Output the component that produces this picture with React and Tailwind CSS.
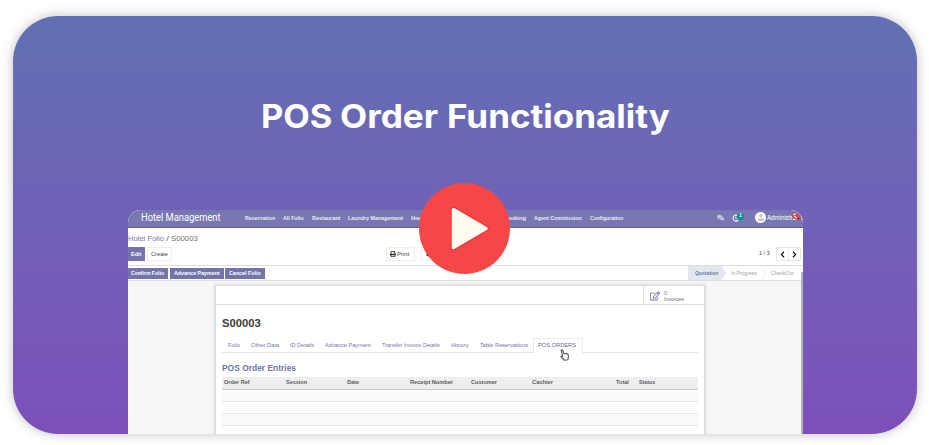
import { useLayoutEffect, useRef } from "react";
import { FaComments, FaPrint, FaCog, FaRegEdit, FaChevronLeft, FaChevronRight, FaUser } from "react-icons/fa";

// One line of text stretched to fill the width of its box.
function Fit({ className, children }) {
  const box = useRef(null);
  const text = useRef(null);
  useLayoutEffect(() => {
    const ratio = box.current.clientWidth / text.current.offsetWidth;
    text.current.style.transform = `scaleX(${ratio})`;
  }, []);
  return (
    <span ref={box} className={`block shrink-0 whitespace-nowrap ${className}`}>
      <span ref={text} className="inline-block origin-left align-top">{children}</span>
    </span>
  );
}

const menu = [
  ["Reservation", "w-[30px]"],
  ["All Folio", "ml-[8px] w-[21px]"],
  ["Restaurant", "ml-[8px] w-[28px]"],
  ["Laundry Management", "ml-[8px] w-[55px]"],
  ["Housekeeping", "ml-[8px] w-[37px]"],
  ["Table Booking", "ml-[39px] w-[39px]"],
  ["Agent Commission", "ml-[8px] w-[48px]"],
  ["Configuration", "ml-[8px] w-[33px]"],
];

const tabs = [
  ["Folio", "ml-[6px] w-[12px]"],
  ["Other Data", "ml-[11px] w-[28px]"],
  ["ID Details", "ml-[11px] w-[24px]"],
  ["Advance Payment", "ml-[11px] w-[46px]"],
  ["Transfer Invoice Details", "ml-[11px] w-[58px]"],
  ["History", "ml-[11px] w-[18px]"],
  ["Table Reservations", "ml-[11px] w-[48px]"],
];

const columns = [
  ["Order Ref", "ml-[2px] w-[26px]"],
  ["Session", "ml-[36px] w-[21px]"],
  ["Date", "ml-[40px] w-[12px]"],
  ["Receipt Number", "ml-[51px] w-[43px]"],
  ["Customer", "ml-[18px] w-[26px]"],
  ["Cashier", "ml-[35px] w-[21px]"],
  ["Total", "ml-[63px] w-[13px]"],
  ["Status", "ml-[10px] w-[16px]"],
];

function Navbar() {
  return (
    <div className="flex h-[18px] items-center border-b border-[#66669f] bg-[#7777b1] pb-[2px] text-white">
      <Fit className="ml-[13px] w-[80px] pt-[1px] font-['Roboto','Liberation_Sans',sans-serif] text-[10.5px] leading-[12px]">Hotel Management</Fit>
      <div className="ml-[24px] flex items-center pt-[1px] text-[6px] font-bold leading-[7px] text-[#ececf7]">
        {menu.map(([label, size]) => <Fit key={label} className={size}>{label}</Fit>)}
      </div>
      <FaComments className="ml-[94px] h-[7px] w-[7px] shrink-0 text-[#c5c5df]" />
      <div className="relative ml-[8px] h-[8px] w-[8px] shrink-0">
        <svg viewBox="0 0 8 8" className="h-[8px] w-[8px]" fill="none" stroke="#f1f1fa">
          <path d="M6.2 2A3 3 0 1 0 6.4 6" strokeWidth="1.2" />
          <path d="M3.8 2.7v1.8h1.5" strokeWidth=".8" />
        </svg>
        <span className="absolute -top-[1px] left-[5px] flex h-[7px] w-[7px] items-center justify-center rounded-full bg-[#08929a] text-[4.5px] font-bold leading-none">1</span>
      </div>
      <div className="ml-[15px] flex h-[11px] w-[11px] shrink-0 items-center justify-center rounded-full bg-white">
        <FaUser className="h-[7px] w-[6px] text-[#c7c7cf]" />
      </div>
      <div className="relative ml-[1px]">
        <Fit className="w-[36px] text-[6.5px] leading-[8px]">Administrator</Fit>
        <svg viewBox="0 0 9 7" className="absolute -top-[1px] left-[25px] h-[7px] w-[9px]">
          <path d="M0 0h5l4 4v3H5L0 4z" fill="#c4504c" />
          <path d="M1 1.2h3M2 3l3 2" stroke="#fff" strokeWidth="1" />
          <path d="M5 5l2 1" stroke="#4a3848" />
        </svg>
      </div>
    </div>
  );
}

function ControlPanel() {
  return (
    <>
      <div className="flex h-[19px] items-center pt-[1px] text-[7.5px] leading-[9px] text-[#707070]">
        <Fit className="w-[36px] text-[#7777ab]">Hotel Folio</Fit>
        <Fit className="ml-[2px] w-[3px]">/</Fit>
        <Fit className="ml-[2px] w-[27px]">S00003</Fit>
      </div>
      <div className="flex h-[19px] items-start border-b border-[#ddd] text-[6px] leading-[7px] text-[#444]">
        <div className="flex h-[14px] w-[17px] items-center bg-[#7474ac] text-white">
          <Fit className="ml-[3px] w-[10px] font-bold">Edit</Fit>
        </div>
        <div className="ml-[2px] flex h-[14px] w-[25px] items-center border border-[#eee] pl-[3px]">
          <Fit className="w-[17px]">Create</Fit>
        </div>
        <div className="ml-[214px] flex h-[14px] w-[29px] items-center border border-[#eee] pl-[3px]">
          <FaPrint className="h-[6px] w-[6px] text-[#333]" />
          <Fit className="ml-[1px] w-[12px]">Print</Fit>
        </div>
        <div className="ml-[6px] flex h-[14px] w-[34px] items-center border border-[#eee] pl-[4px]">
          <FaCog className="h-[6px] w-[6px] text-[#222]" />
          <Fit className="ml-[1px] w-[16px]">Action</Fit>
        </div>
        <Fit className="ml-[304px] mt-[3px] w-[11px]">1 / 3</Fit>
        <div className="ml-[6px] flex h-[14px] w-[25px] rounded-[1px] border border-[#e6e6e6] text-black">
          <span className="flex w-[12px] items-center justify-center border-r border-[#eee]"><FaChevronLeft className="h-[7px] w-[5px]" /></span>
          <span className="flex w-[12px] items-center justify-center"><FaChevronRight className="h-[7px] w-[5px]" /></span>
        </div>
      </div>
    </>
  );
}

function StatusBar() {
  return (
    <div className="flex h-[15px] items-center border-b border-[#dcdcdc] text-[6px] leading-[7px]">
      <div className="flex h-[11px] w-[40px] items-center bg-[#7474ac] font-bold text-white"><Fit className="ml-[3px] w-[33px]">Confirm Folio</Fit></div>
      <div className="ml-[2px] flex h-[11px] w-[54px] items-center bg-[#7474ac] font-bold text-white"><Fit className="ml-[4px] w-[46px]">Advance Payment</Fit></div>
      <div className="ml-[1px] flex h-[11px] w-[40px] items-center bg-[#7474ac] font-bold text-white"><Fit className="ml-[4px] w-[32px]">Cancel Folio</Fit></div>
      <div className="ml-[423px] flex h-full w-[34px] items-center bg-[#e2e6ed] text-[#6d79a8]"><Fit className="ml-[7px] w-[23px] font-bold">Quotation</Fit></div>
      <svg viewBox="0 0 4 14" className="h-[14px] w-[4px]"><path d="M0 0L4 7L0 14z" fill="#e2e6ed" /></svg>
      <Fit className="ml-[5px] w-[26px] text-[#9c9c9c]">In Progress</Fit>
      <svg viewBox="0 0 4 14" className="ml-[5px] h-[14px] w-[4px]"><path d="M0 0L3.5 7L0 14" fill="none" stroke="#ececec" /></svg>
      <Fit className="ml-[5px] w-[23px] text-[#9c9c9c]">CheckOut</Fit>
    </div>
  );
}

function PointerHand({ className }) {
  return (
    <svg viewBox="0 0 9 12" className={className}>
      <path
        d="M1.2 1.2c.5-.6 1.3-.4 1.6.3L4 4.6l2.6-.1c1.2.2 1.7.9 1.8 2.1.1 1.7-.4 2.5-.4 4.1L4.3 11.3C3.6 9.8 1.8 9.2.9 7.6c.3-.7 1-.7 1.8-.1z"
        fill="#fff"
        stroke="#555"
        strokeWidth="1.1"
        strokeLinejoin="round"
      />
    </svg>
  );
}

function Sheet() {
  return (
    <div className="ml-[87px] mt-[4px] h-[150px] w-[490px] border border-[#d9d9d9] bg-white shadow-[0_0_4px_rgba(0,0,0,0.16)]">
      <div className="flex h-[19px] justify-end border-b border-[#ddd]">
        <div className="flex w-[61px] items-start border-l border-[#ddd] pl-[6px] pt-[5px]">
          <FaRegEdit className="h-[10px] w-[10px] text-[#7777a8]" />
          <div className="ml-[4px] text-[6px] leading-[6px] text-[#707078]">
            <Fit className="-mt-[1px] w-[3px] text-[#7777b1]">0</Fit>
            <Fit className="w-[20px]">Invoices</Fit>
          </div>
        </div>
      </div>
      <div className="px-[6px]">
        <Fit className="mt-[12px] w-[39px] text-[11.5px] font-bold leading-[13px] text-[#3c3c3c]">S00003</Fit>
        <div className="mt-[8px] flex h-[15px] items-center border-b border-[#e4e4e4] text-[6px] leading-[7px] text-[#7777a8]">
          {tabs.map(([label, size]) => <Fit key={label} className={size}>{label}</Fit>)}
          <div className="relative -mb-[1px] ml-[5px] flex h-[15px] w-[50px] items-center border border-b-0 border-[#ebebeb] bg-white pb-[2px] pl-[4px] text-[#6b6b88]">
            <Fit className="w-[38px]">POS ORDERS</Fit>
            <PointerHand className="absolute left-[26px] top-[10px] h-[12px] w-[9px]" />
          </div>
        </div>
        <Fit className="mt-[10px] w-[74px] text-[9px] font-bold leading-[11px] text-[#7171aa]">POS Order Entries</Fit>
        <div className="mt-[3px] flex h-[13px] items-center border-b border-[#cfcfcf] bg-[#eeeeee] pb-[1px] text-[6px] font-bold leading-[7px] text-[#5c5c5c]">
          {columns.map(([label, size]) => <Fit key={label} className={size}>{label}</Fit>)}
        </div>
        <div className="h-[12px] border-b border-[#e8e8e8] bg-[#fafafa]" />
        <div className="h-[12px] border-b border-[#e8e8e8]" />
        <div className="h-[12px] border-b border-[#e8e8e8] bg-[#fafafa]" />
      </div>
    </div>
  );
}

export default function App() {
  return (
    <div className="h-[445px] w-[929px] overflow-hidden bg-white pl-[13px] pt-[16px] font-['Liberation_Sans',sans-serif]">
      <div className="relative flex h-[418px] w-[904px] flex-col rounded-[45px] bg-linear-to-b from-[#6170b3] to-[#7c4fba] shadow-[0_0_12px_rgba(0,0,0,0.25)]">
        <h1 className="ml-[248px] mt-[80px] flex h-[42px] font-['Inter','Open_Sans',sans-serif] text-[32px] font-bold leading-[42px] text-white">
          <Fit className="w-[71px]">POS</Fit>
          <Fit className="ml-[8px] w-[98px]">Order</Fit>
          <Fit className="ml-[9px] w-[223px]">Functionality</Fit>
        </h1>
        <div className="relative ml-[115px] mt-[72px] h-[224px] w-[675px] overflow-hidden rounded-t-[13px] bg-[#f6f6f6]">
          <div className="bg-white">
            <Navbar />
            <ControlPanel />
            <StatusBar />
          </div>
          <Sheet />
          <div className="absolute right-0 top-[62px] h-[162px] w-[2px] bg-[#b3b3b3]" />
        </div>
        <svg viewBox="0 0 91 91" className="absolute left-[406px] top-[167px] h-[91px] w-[91px]">
          <circle cx="45.5" cy="45.5" r="45.5" fill="#f54748" />
          <path d="M34.5 26.5L67 45.5L34.5 64.5z" fill="#fffcef" stroke="#e7202c" strokeWidth="5" strokeLinejoin="round" />
          <path d="M34.5 26.5L67 45.5L34.5 64.5z" fill="#fffcef" stroke="#fffcef" strokeWidth="3.6" strokeLinejoin="round" />
        </svg>
      </div>
    </div>
  );
}
